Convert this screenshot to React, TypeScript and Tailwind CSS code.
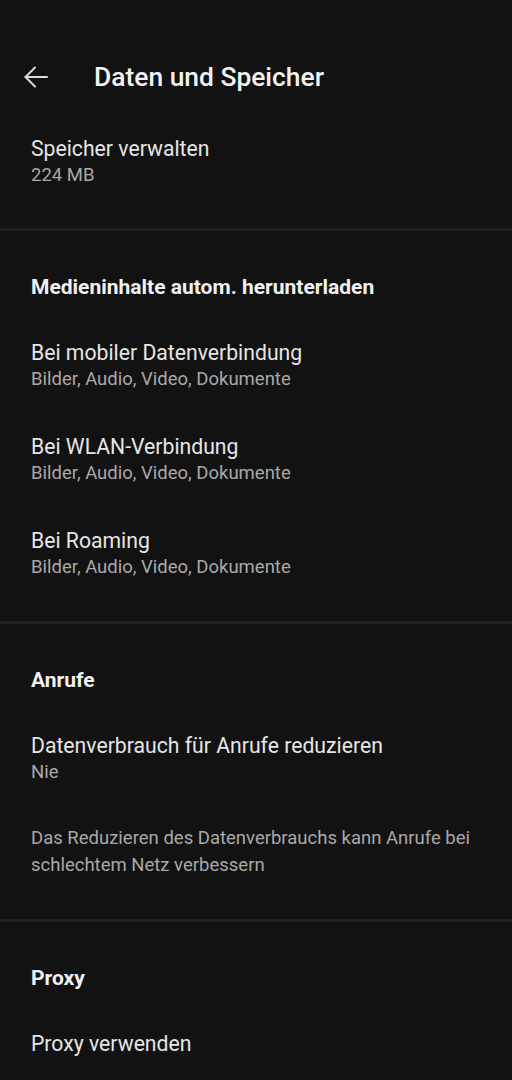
import React from 'react';

const font = { fontFamily: 'Roboto, "Noto Sans", sans-serif' };

function Item({ title, sub }: { title: string; sub?: string }) {
  return (
    <div className="px-[31px] pt-[22px] pb-[20px]">
      <div className="text-[21.2px] leading-[26px] text-[#e6e6e6]">{title}</div>
      {sub && <div className="text-[18.5px] leading-[26px] text-[#a9a9a9]">{sub}</div>}
    </div>
  );
}

function SectionHeader({ children }: { children: React.ReactNode }) {
  return (
    <div className="px-[31px] pt-[43px] pb-[18px] text-[21px] leading-[26px] font-bold text-[#f0f0f0]">
      {children}
    </div>
  );
}

function Divider() {
  return <div className="h-[3px] bg-[#212121]" />;
}

export default function App() {
  return (
    <div className="min-h-screen bg-[#121212] overflow-hidden" style={font}>
      <div className="pt-[40px]">
        <div className="h-[74px] flex items-center">
          <div className="w-[94px] flex items-center pl-[24px]">
            <svg width="24" height="22" viewBox="0 0 24 22" fill="none" stroke="#dcdcdc" strokeWidth="2" strokeLinecap="round" strokeLinejoin="round">
              <path d="M23 11H1.5" />
              <path d="M11 1.5L1.5 11L11 20.5" />
            </svg>
          </div>
          <h1 className="text-[26.4px] leading-[30px] font-medium text-[#f2f2f2]">Daten und Speicher</h1>
        </div>
      </div>

      <Item title="Speicher verwalten" sub="224 MB" />
      <div className="h-[20px]" />
      <Divider />

      <SectionHeader>Medieninhalte autom. herunterladen</SectionHeader>
      <Item title="Bei mobiler Datenverbindung" sub="Bilder, Audio, Video, Dokumente" />
      <Item title="Bei WLAN-Verbindung" sub="Bilder, Audio, Video, Dokumente" />
      <Item title="Bei Roaming" sub="Bilder, Audio, Video, Dokumente" />
      <div className="h-[21px]" />
      <Divider />

      <SectionHeader>Anrufe</SectionHeader>
      <Item title="Datenverbrauch für Anrufe reduzieren" sub="Nie" />
      <div className="px-[31px] pt-[20px] pb-[40px] text-[18.5px] leading-[27px] text-[#a9a9a9]">
        Das Reduzieren des Datenverbrauchs kann Anrufe bei schlechtem Netz verbessern
      </div>
      <Divider />

      <SectionHeader>Proxy</SectionHeader>
      <Item title="Proxy verwenden" />
    </div>
  );
}
